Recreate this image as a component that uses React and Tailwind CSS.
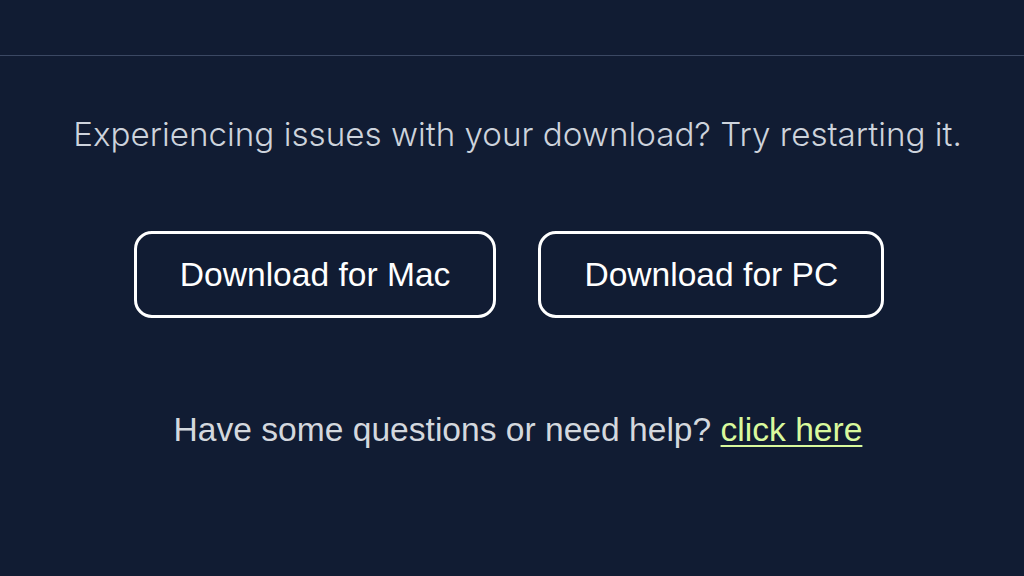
export default function App() {
  return (
    <div className="w-[1024px] h-[576px] bg-[#111c33] overflow-hidden flex flex-col">
      <div className="h-[56px] border-b border-[#3b4863] shrink-0" />
      <div className="flex flex-col items-center">
        <p className="mt-[58px] pl-[11px] text-[33.2px] leading-[40px] text-[#cdd3dc] font-light" style={{ fontFamily: 'Inter, "Noto Sans", sans-serif' }}>
          Experiencing issues with your download? Try restarting it.
        </p>
        <div className="mt-[77px] pr-[6px] flex gap-[42px]" style={{ fontFamily: '"Liberation Sans", Arial, sans-serif' }}>
          <button className="h-[87px] px-[43px] border-[3px] border-white rounded-[18px] text-white text-[33.6px] leading-none">
            Download for Mac
          </button>
          <button className="h-[87px] px-[43px] border-[3px] border-white rounded-[18px] text-white text-[33.6px] leading-none">
            Download for PC
          </button>
        </div>
        <p className="mt-[92px] pl-[12px] text-[33.6px] leading-[40px] text-[#d4d8de]" style={{ fontFamily: '"Liberation Sans", Arial, sans-serif' }}>
          Have some questions or need help?{" "}
          <a href="#" className="text-[#d9f99d] underline underline-offset-[4px] decoration-2">click here</a>
        </p>
      </div>
    </div>
  );
}
